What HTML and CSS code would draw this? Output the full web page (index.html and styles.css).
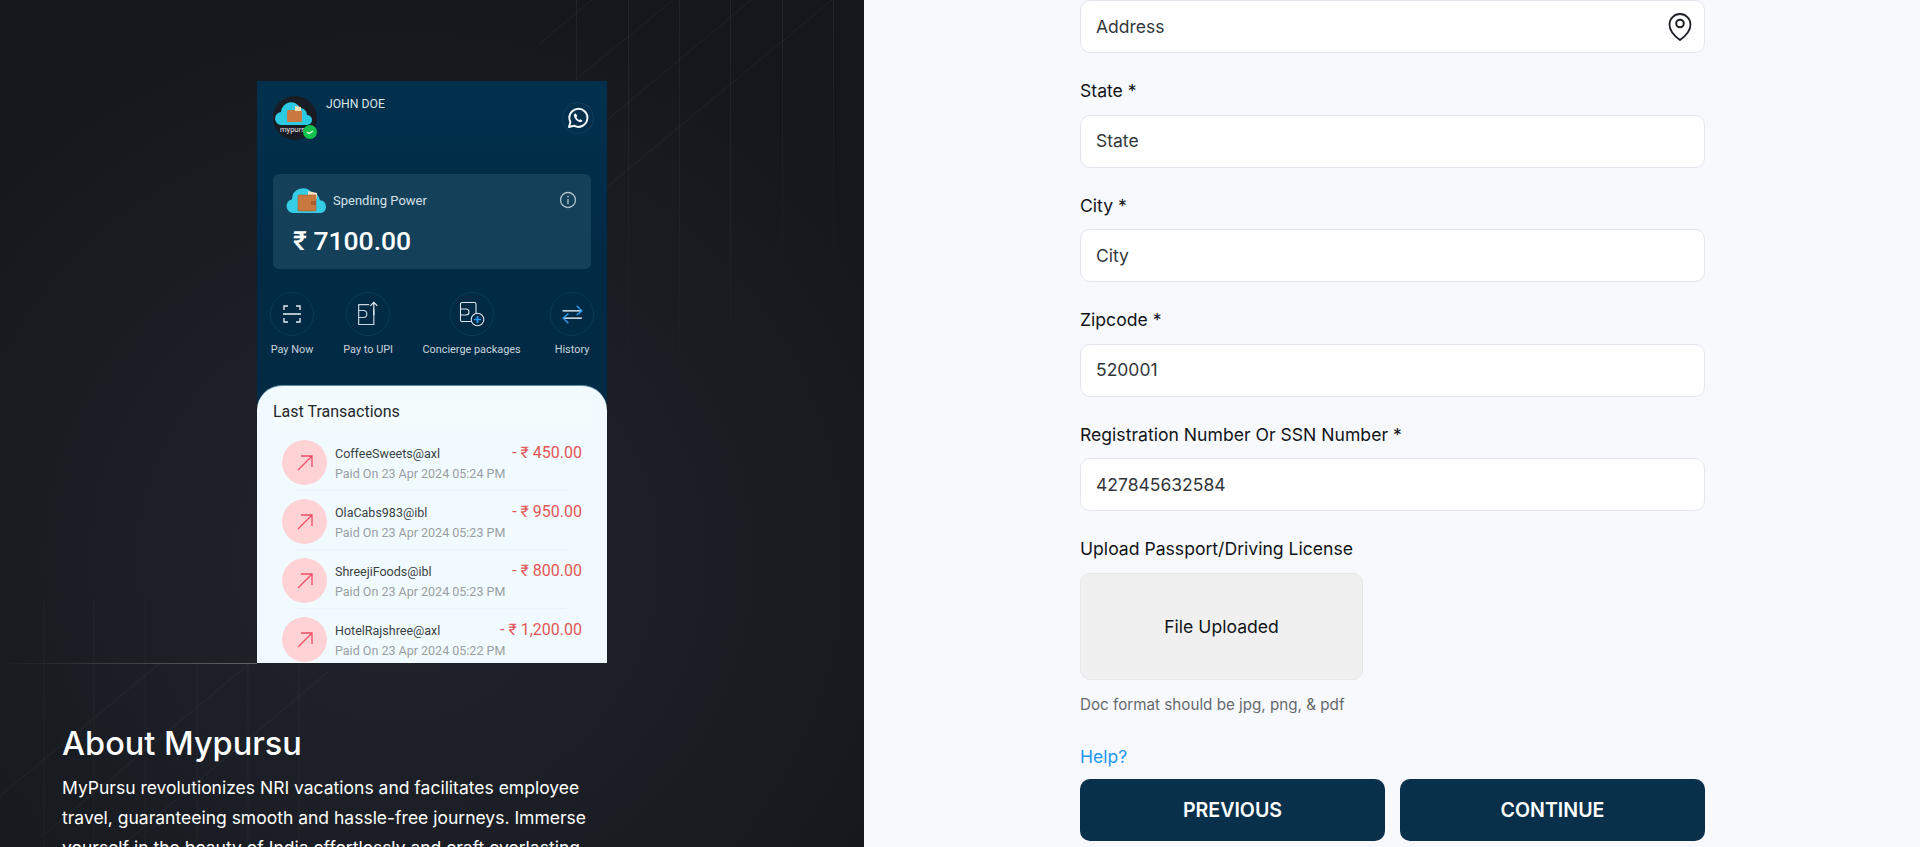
FILE: index.html
```html
<!DOCTYPE html>
<html lang="en">
<head>
<meta charset="utf-8">
<title>MyPursu</title>
<link rel="stylesheet" href="styles.css">
</head>
<body>
<div class="app">
  <aside class="left">
    <svg class="deco" viewBox="0 0 864 847" width="864" height="847" aria-hidden="true">
      <defs>
        <linearGradient id="fadeV" x1="0" y1="0" x2="0" y2="1"><stop offset="0" stop-color="#fff" stop-opacity=".06"/><stop offset="1" stop-color="#fff" stop-opacity="0"/></linearGradient>
        <linearGradient id="rule" x1="0" y1="0" x2="1" y2="0"><stop offset="0" stop-color="#fff" stop-opacity="0"/><stop offset="1" stop-color="#fff" stop-opacity=".3"/></linearGradient>
      </defs>
      <g fill="url(#fadeV)">
        <rect x="576" y="0" width="1" height="330"/><rect x="628" y="0" width="1" height="400"/><rect x="679" y="0" width="1" height="400"/><rect x="730" y="0" width="1" height="400"/><rect x="782" y="0" width="1" height="300"/><rect x="833" y="0" width="1" height="300"/>
      </g>
      <g stroke="#fff" stroke-opacity=".05" fill="none">
        <path d="M592 0 539 44M673 0 575 80M751 0 607 120M832 0 607 187"/>
        <path d="M250 663 42 836M328 672 120 847M160 663 0 796"/>
        <path d="M44 600V847M94 600V847M145 600V847M197 663V847M248 663V847M299 663V847" stroke-opacity=".03"/>
      </g>
      <rect x="0" y="663" width="257" height="1" fill="url(#rule)"/>
    </svg>

    <div class="phone">
      <div class="phone-top">
        <svg class="avatar" viewBox="0 0 44 44" width="44" height="44" aria-hidden="true">
          <circle cx="22" cy="22" r="22" fill="#191c23"/>
          <path d="M9 29a6.500 6.500 0 0 1-1-13 10 10 0 0 1 19-4 7 7 0 0 1 7 7 5 5 0 0 1 0 10z" fill="#2cc9e2"/>
          <rect x="14" y="14" width="15" height="12" rx="1.500" fill="#c9783f"/>
          <path d="M22 10l6 1v4h-6z" fill="#f3dcb4"/>
          <text x="7" y="36" class="avatar-text">mypurs</text>
          <circle cx="37" cy="36" r="7" fill="#13c24b"/>
          <path d="M34 36l2 1.500 4-2.500" stroke="#e9fbe9" stroke-width="1.200" fill="none"/>
        </svg>
        <div class="name">JOHN DOE</div>
        <div class="wa">
          <svg viewBox="0 0 24 24" width="24" height="24" aria-hidden="true"><path d="M3 21l1.400-5A9 9 0 1 1 8 19.700z" fill="none" stroke="#f2f6f8" stroke-width="2" stroke-linejoin="round"/><path d="M9 7.500c-1 .5-1.500 1.700-1 3 .8 2.600 3 4.700 5.600 5.500 1.300.4 2.500-.1 3-1.200l-2.200-1.600-1.200.9c-1.200-.6-2.200-1.600-2.800-2.800l.9-1.200L9.800 7.500z" fill="#f2f6f8"/></svg>
        </div>
      </div>

      <section class="balance">
        <div class="balance-head">
          <svg viewBox="0 0 42 26" width="42" height="26" aria-hidden="true"><path d="M7 26a7 7 0 0 1-1-13.800A11 11 0 0 1 26 6a9 9 0 0 1 8 7.200A6.500 6.500 0 0 1 35 26z" fill="#35cde6"/><path d="M22 4l9 2v6h-9z" fill="#f6e3c4"/><rect x="12" y="8" width="18" height="16" rx="1" fill="#c9783f" stroke="#a85e2c" stroke-width=".6"/><rect x="25" y="14" width="5" height="4" fill="#a85e2c"/></svg>
          <span class="balance-label">Spending Power</span>
          <svg class="info" viewBox="0 0 18 18" width="18" height="18" aria-hidden="true"><circle cx="9" cy="9" r="7.500" fill="none" stroke="#aebfca" stroke-width="1.300"/><path d="M9 8v5" stroke="#aebfca" stroke-width="1.400"/><circle cx="9" cy="5.600" r=".9" fill="#aebfca"/></svg>
        </div>
        <div class="balance-amount">₹ 7100.00</div>
      </section>

      <div class="actions">
        <div class="action">
          <span class="action-ring"><svg viewBox="0 0 24 24" width="24" height="24" fill="none" stroke="#dfe8ee" stroke-width="1.400" aria-hidden="true"><path d="M8 4H4v4M16 4h4v4M4 16v4h4M20 16v4h-4"/><path d="M3 12h18" stroke-width="1.600"/></svg></span>
          <span class="action-label">Pay Now</span>
        </div>
        <div class="action">
          <span class="action-ring"><svg viewBox="0 0 24 24" width="28" height="28" fill="none" stroke="#c9d6de" stroke-width="1" aria-hidden="true"><path d="M13 4H4v2M4 6v15h13V8"/><path d="M4 9h4a2.500 2.500 0 0 1 0 6H4"/><path d="M17 13V2M14 5l3-3 3 3" stroke="#e8eff3"/></svg></span>
          <span class="action-label">Pay to UPI</span>
        </div>
        <div class="action">
          <span class="action-ring"><svg viewBox="0 0 26 26" width="26" height="26" fill="none" stroke="#dfe8ee" stroke-width="1.100" aria-hidden="true"><path d="M17 12V3a1.500 1.500 0 0 0-1.500-1.500H3A1.500 1.500 0 0 0 1.500 3v16A1.500 1.500 0 0 0 3 20.500h9"/><path d="M2 8h5a3 3 0 0 1 0 6H2"/><circle cx="18.500" cy="18.500" r="6.300"/><path d="M18.500 15v7M15 18.500h7" stroke="#2b9bf0" stroke-width="1.700"/></svg></span>
          <span class="action-label">Concierge packages</span>
        </div>
        <div class="action">
          <span class="action-ring"><svg viewBox="0 0 24 24" width="25" height="25" fill="none" stroke-width="1.400" aria-hidden="true"><path d="M2.500 8.500h18" stroke="#dfe8ee"/><path d="M16 3.500l5 5-5 4" stroke="#2b9bf0"/><path d="M21 15.500H3" stroke="#dfe8ee"/><path d="M8 11l-5 4.500 5 5" stroke="#2b9bf0"/></svg></span>
          <span class="action-label">History</span>
        </div>
      </div>

      <section class="sheet">
        <h3 class="sheet-title">Last Transactions</h3>
        <div class="txn">
          <span class="txn-dot"><svg viewBox="0 0 20 20" width="20" height="20" fill="none" stroke="#ee4d66" stroke-width="1.300" aria-hidden="true"><path d="M3 17 17 3M6 3h11v11"/></svg></span>
          <div class="txn-body"><div class="txn-name">CoffeeSweets@axl</div><div class="txn-date">Paid On 23 Apr 2024 05:24 PM</div></div>
          <div class="txn-amt">- ₹ 450.00</div>
        </div>
        <div class="txn">
          <span class="txn-dot"><svg viewBox="0 0 20 20" width="20" height="20" fill="none" stroke="#ee4d66" stroke-width="1.300" aria-hidden="true"><path d="M3 17 17 3M6 3h11v11"/></svg></span>
          <div class="txn-body"><div class="txn-name">OlaCabs983@ibl</div><div class="txn-date">Paid On 23 Apr 2024 05:23 PM</div></div>
          <div class="txn-amt">- ₹ 950.00</div>
        </div>
        <div class="txn">
          <span class="txn-dot"><svg viewBox="0 0 20 20" width="20" height="20" fill="none" stroke="#ee4d66" stroke-width="1.300" aria-hidden="true"><path d="M3 17 17 3M6 3h11v11"/></svg></span>
          <div class="txn-body"><div class="txn-name">ShreejiFoods@ibl</div><div class="txn-date">Paid On 23 Apr 2024 05:23 PM</div></div>
          <div class="txn-amt">- ₹ 800.00</div>
        </div>
        <div class="txn">
          <span class="txn-dot"><svg viewBox="0 0 20 20" width="20" height="20" fill="none" stroke="#ee4d66" stroke-width="1.300" aria-hidden="true"><path d="M3 17 17 3M6 3h11v11"/></svg></span>
          <div class="txn-body"><div class="txn-name">HotelRajshree@axl</div><div class="txn-date">Paid On 23 Apr 2024 05:22 PM</div></div>
          <div class="txn-amt">- ₹ 1,200.00</div>
        </div>
      </section>
    </div>

    <div class="about">
      <h2 class="about-title">About Mypursu</h2>
      <p class="about-text">MyPursu revolutionizes NRI vacations and facilitates employee travel, guaranteeing smooth and hassle-free journeys. Immerse yourself in the beauty of India effortlessly and craft everlasting memories.</p>
    </div>
  </aside>

  <main class="right">
    <form class="form">
      <div class="input input-first">
        <span>Address</span>
        <svg viewBox="0 0 24 28" width="24" height="28" fill="none" stroke="#1d2024" stroke-width="1.800" aria-hidden="true"><path d="M12 27C5 22 1.500 17 1.500 11.500a10.500 10.500 0 0 1 21 0C22.500 17 19 22 12 27z"/><circle cx="12" cy="10.500" r="3.800" stroke-width="2"/></svg>
      </div>
      <div class="group"><label class="label">State *</label><div class="input"><span>State</span></div></div>
      <div class="group"><label class="label">City *</label><div class="input"><span>City</span></div></div>
      <div class="group"><label class="label">Zipcode *</label><div class="input"><span>520001</span></div></div>
      <div class="group"><label class="label">Registration Number Or SSN Number *</label><div class="input"><span>427845632584</span></div></div>
      <div class="group"><label class="label">Upload Passport/Driving License</label>
        <div class="upload">File Uploaded</div>
        <p class="hint">Doc format should be jpg, png, &amp; pdf</p>
      </div>
      <a class="help">Help?</a>
      <div class="buttons">
        <button type="button" class="btn">PREVIOUS</button>
        <button type="button" class="btn">CONTINUE</button>
      </div>
    </form>
  </main>
</div>
</body>
</html>
```

FILE: styles.css
```css
* { box-sizing: border-box; }
html, body { margin: 0; height: 847px; overflow: hidden; }
body { font-family: Inter, "Liberation Sans", sans-serif; background: #f8f9fd; }

.app { display: flex; height: 847px; }

/* Left panel */
.left {
  position: relative;
  width: 864px;
  flex: none;
  height: 847px;
  overflow: hidden;
  padding-top: 81px;
  background: radial-gradient(ellipse 70% 70% at 46% 66%, #21242c 0%, #1a1d23 55%, #14171b 100%);
}
.deco { position: absolute; left: 0; top: 0; }

.phone {
  position: relative;
  width: 350px;
  height: 582px;
  margin: 0 auto;
  overflow: hidden;
  background: linear-gradient(#02304d, #012a45 30%, #002944);
  font-family: Roboto, "Liberation Sans", sans-serif;
}
.phone-top { display: flex; padding: 15px 13px 0 16px; height: 93px; }
.avatar { flex: none; }
.avatar-text { font-family: Roboto, sans-serif; font-size: 7.500px; fill: #e6e6e6; }
.name { margin: 1px 0 0 9px; flex: 1; font-size: 12.200px; line-height: 14px; color: #dbe4ea; }
.wa {
  width: 32px; height: 32px; margin-top: 6px; border-radius: 50%;
  border: 1px solid #0f3f5e; display: flex; align-items: center; justify-content: center;
}

.balance { margin: 0 16px; height: 95px; border-radius: 6px; background: #14405a; padding: 13px 14px 0 13px; }
.balance-head { display: flex; align-items: center; gap: 5px; height: 26px; }
.balance-label { flex: 1; font-size: 13px; color: #d6e1e8; }
.balance-amount { margin: 10px 0 0 7px; font-size: 26.500px; line-height: 36px; font-weight: 500; color: #fff; }

.actions { display: flex; justify-content: space-between; padding: 23px 13px 0; }
.action { display: flex; flex-direction: column; align-items: center; }
.action-ring {
  width: 44px; height: 44px; border-radius: 50%; border: 1px solid #0d3a58;
  display: flex; align-items: center; justify-content: center;
}
.action-label { font-size: 10.900px; line-height: 28px; color: #c8d4dc; white-space: nowrap; }

.sheet {
  margin-top: 21px;
  height: 300px;
  border-radius: 25px 25px 0 0;
  background: #f1fbff;
  border-top: 1px solid #5b8aa3;
  padding: 13px 16px 0;
}
.sheet-title {
  margin: 0 0 10px;
  font-size: 16px;
  line-height: 26px;
  font-weight: 400;
  color: #23282c;
  background: #f4fbfd;
}
.txn { display: flex; align-items: flex-start; height: 59px; margin: 0 -1px 0 9px; padding-right: 10px; position: relative; }
.txn::after { content: ""; position: absolute; left: 16px; right: 26px; bottom: 3px; height: 1px; background: #eaf3f7; }
.txn-dot {
  flex: none; width: 45px; height: 45px; border-radius: 50%; background: #ffd2d6;
  display: flex; align-items: center; justify-content: center; margin-top: 5px;
}
.txn-body { flex: 1; min-width: 0; margin: 8px 0 0 8px; }
.txn-name { font-size: 12.500px; line-height: 21px; color: #3a3f44; }
.txn-date { font-size: 12.500px; line-height: 20px; color: #9a9ea2; white-space: nowrap; }
.txn-amt { font-size: 16px; line-height: 22px; margin-top: 7px; color: #e45555; white-space: nowrap; }

.about { position: relative; padding: 62px 62px 0; color: #fff; }
.about-title { margin: 0; font-size: 32.500px; line-height: 38px; font-weight: 500; }
.about-text { margin: 10px 0 0; width: 540px; font-size: 17.500px; line-height: 30px; }

/* Right panel */
.right { flex: 1; background: #f8f9fd; padding-left: 216px; }
.form { width: 625px; }
.input {
  height: 53px; display: flex; align-items: center; justify-content: space-between;
  background: #fff; border: 1px solid #e3e6ec; border-radius: 10px;
  padding: 0 12px 0 15px; font-size: 17.500px; line-height: 24px; color: #33373c;
}
.group { margin-top: 26px; }
.label { display: block; font-size: 17.600px; line-height: 24px; font-weight: 400; color: #111418; margin-bottom: 11.500px; }
.upload {
  width: 283px; height: 107px; display: flex; align-items: center; justify-content: center;
  background: #f0f0f0; border: 1px solid #e6e6e6; border-radius: 10px;
  font-size: 17.600px; font-weight: 400; color: #111418;
}
.hint { margin: 15px 0 0; font-size: 15.200px; line-height: 20px; color: #666a6e; }
.help { display: block; margin-top: 30px; font-size: 17.500px; line-height: 24px; color: #2196f3; }
.buttons { display: flex; gap: 15px; margin-top: 10px; }
.btn {
  flex: 1; height: 62px; border: 0; border-radius: 10px; background: #08304b;
  font-family: inherit; font-size: 19.600px; font-weight: 600; color: #fff;
}
```
